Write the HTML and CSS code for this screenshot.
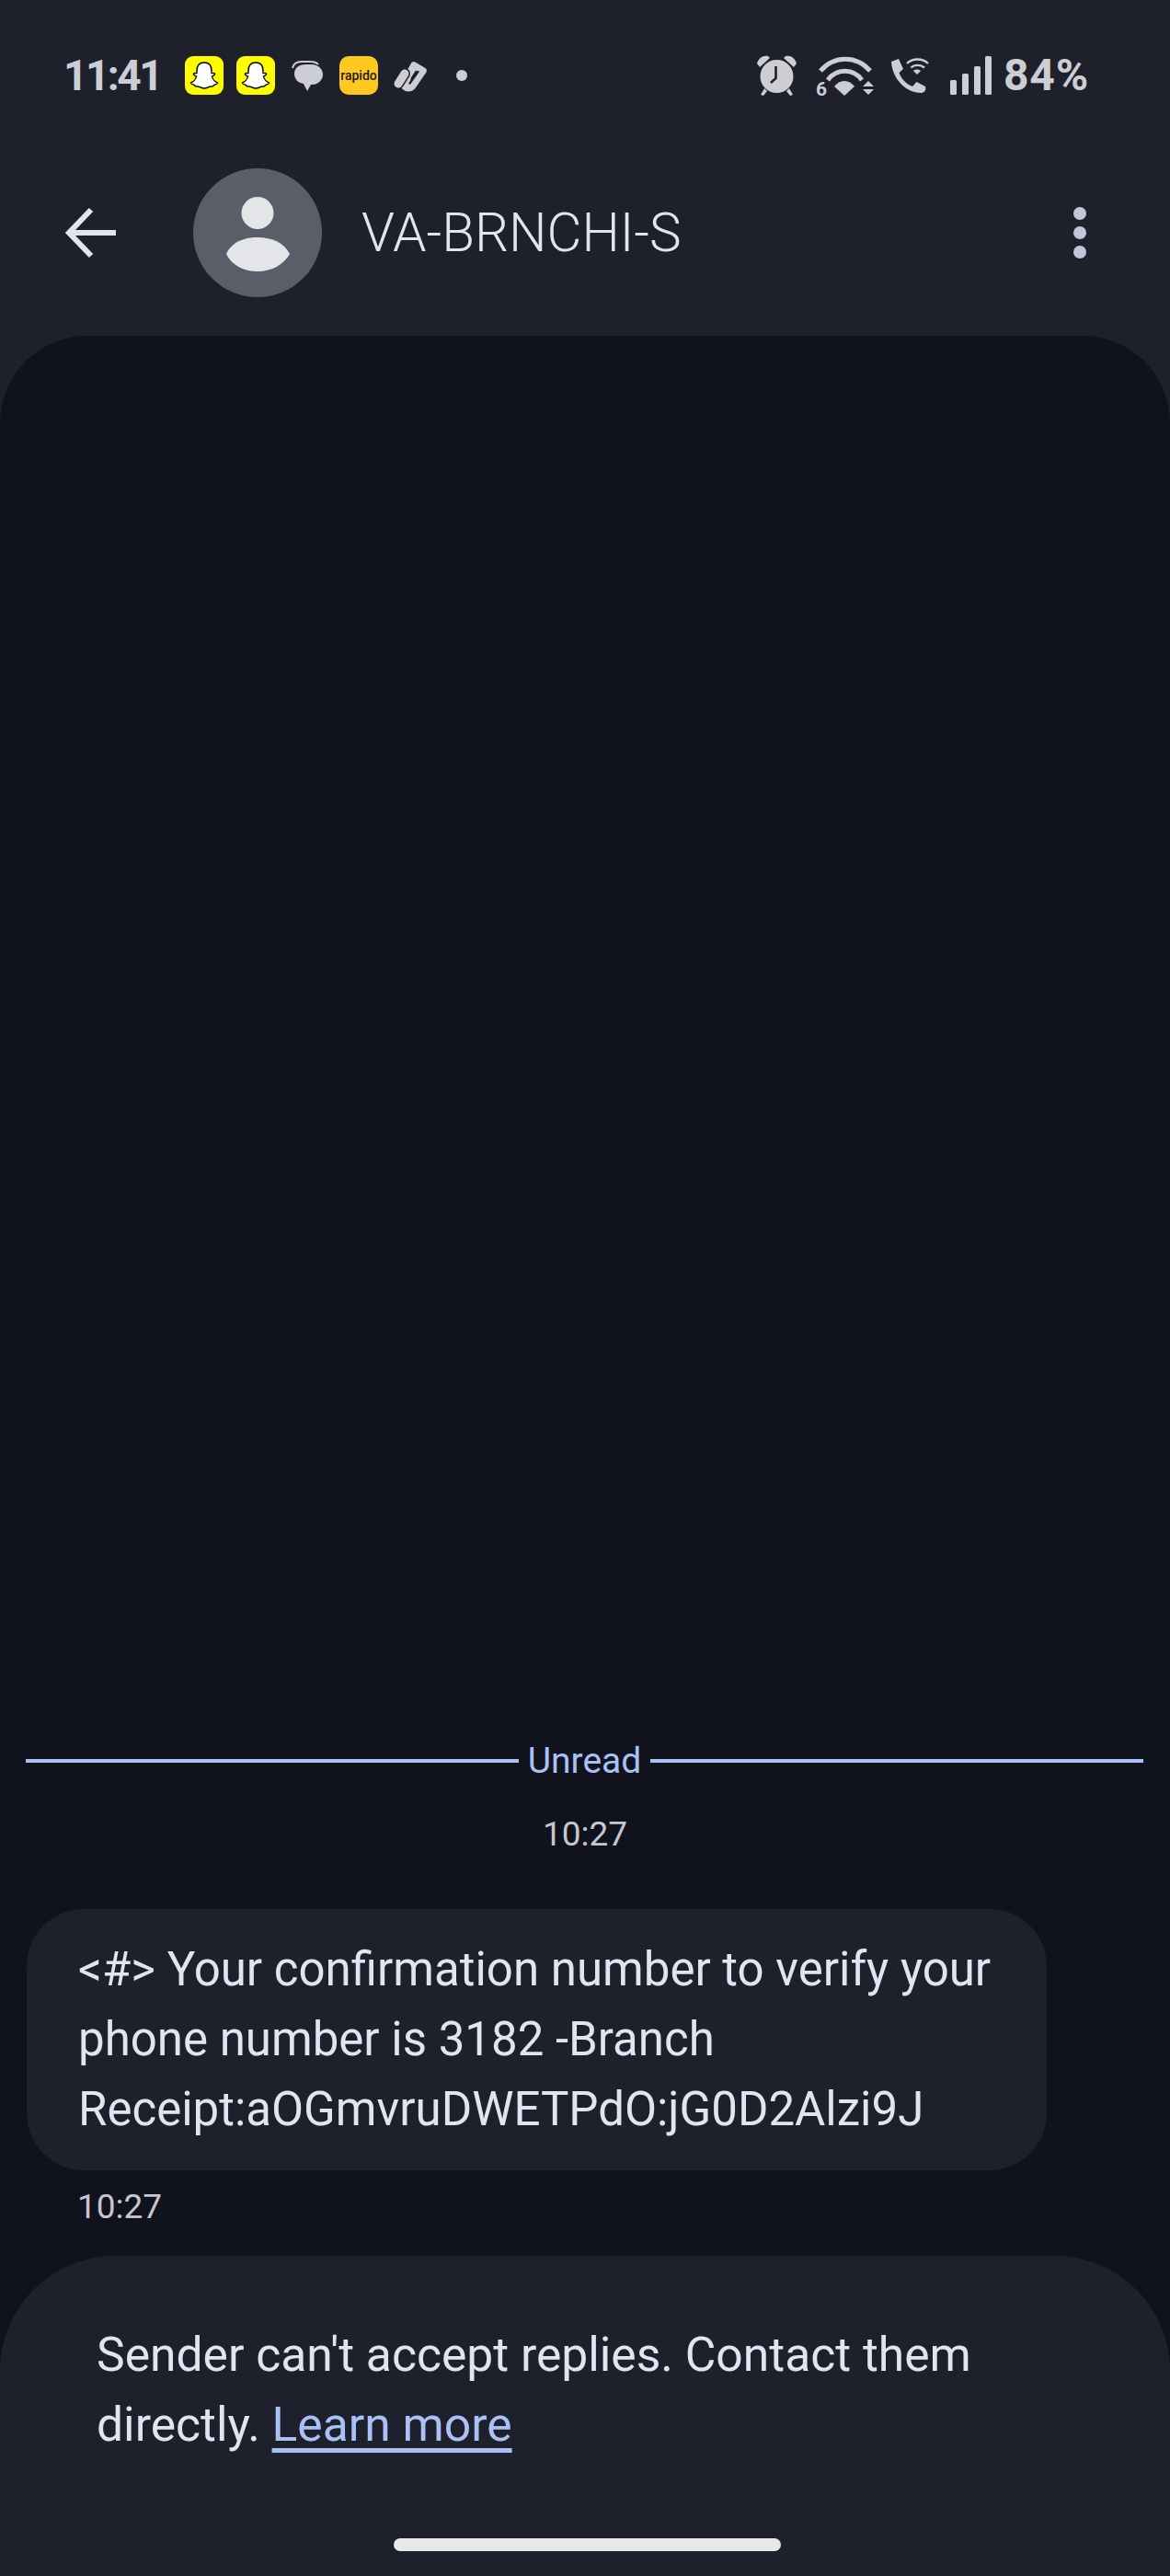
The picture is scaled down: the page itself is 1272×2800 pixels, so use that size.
FILE: index.html
```html
<!DOCTYPE html>
<html lang="en">
<head>
<meta charset="utf-8">
<title>VA-BRNCHI-S</title>
<link rel="stylesheet" href="styles.css">
</head>
<body>
<div class="app">
  <div class="status-bar">
    <span class="clock">11:41</span>
    <svg class="ico snap" viewBox="0 0 42 42"><rect width="42" height="42" rx="9" fill="#fffc00"/><path d="M21 7C15.5 7 13 11 13 16L13 18.5C12 19 10.5 18 9.5 19C9 20.5 11.5 21.5 12.5 22C12 25 9 28 6.5 29C6.5 30.5 9.5 31 10.5 31.5C11 33 11.5 33.5 14 33C16 33 18 35 21 35C24 35 26 33 28 33C30.5 33.5 31 33 31.5 31.5C32.5 31 35.5 30.5 35.5 29C33 28 30 25 29.5 22C30.5 21.5 33 20.5 32.5 19C31.5 18 30 19 29 18.5L29 16C29 11 26.5 7 21 7Z" fill="#fff" stroke="#000" stroke-width="1.4"/></svg>
    <svg class="ico snap snap2" viewBox="0 0 42 42"><rect width="42" height="42" rx="9" fill="#fffc00"/><path d="M21 7C15.5 7 13 11 13 16L13 18.5C12 19 10.5 18 9.5 19C9 20.5 11.5 21.5 12.5 22C12 25 9 28 6.5 29C6.5 30.5 9.5 31 10.5 31.5C11 33 11.5 33.5 14 33C16 33 18 35 21 35C24 35 26 33 28 33C30.5 33.5 31 33 31.5 31.5C32.5 31 35.5 30.5 35.5 29C33 28 30 25 29.5 22C30.5 21.5 33 20.5 32.5 19C31.5 18 30 19 29 18.5L29 16C29 11 26.5 7 21 7Z" fill="#fff" stroke="#000" stroke-width="1.4"/></svg>
    <svg class="ico bubble" viewBox="0 0 34 33"><path d="M1 8C2 3 6 1 11 1H20C24 1 27 2 29 4" fill="none" stroke="#cdced3" stroke-width="2"/><path d="M3 14C3 8 8 4 15 4H22C29 4 34 9 34 15C34 21 29 26 22 26H21L17 33L13 25C7 24 3 20 3 14Z" fill="#cdced3"/></svg>
    <span class="rapido">rapido</span>
    <svg class="ico clip" viewBox="0 0 38 33"><g fill="none" stroke-linecap="round" stroke-linejoin="round"><path d="M23 5L33 11L22 27C19 31 15 30 13 28" stroke="#cdced3" stroke-width="7.5"/><path d="M23 6L16 17L15 25" stroke="#cdced3" stroke-width="8"/><path d="M18.5 24.5L27.5 12" stroke="#1e212b" stroke-width="2.2"/><path d="M6 25L13 14" stroke="#1e212b" stroke-width="12"/><path d="M6 25L13 14" stroke="#cdced3" stroke-width="9"/></g></svg>
    <span class="status-dot"></span>
    <div class="status-right">
      <svg class="ico alarm" viewBox="0 0 43 44"><g fill="#cdced3"><circle cx="21.5" cy="23" r="18"/><path d="M0 9C2 3 6 0 12 1L14 3L3 13Z"/><path d="M43 9C41 3 37 0 31 1L29 3L40 13Z"/><path d="M8 36L11 39L7 44L4 43Z"/><path d="M35 36L32 39L36 44L39 43Z"/></g><path d="M20.5 12V25L15 30" fill="none" stroke="#1e212b" stroke-width="2.6"/></svg>
      <svg class="ico wifi" viewBox="0 0 63 43"><g fill="none" stroke="#cdced3" stroke-width="5"><path d="M5 16C20 -1 44 -1 59 16"/><path d="M13 26C22 13 41 13 50 26"/></g><path d="M20 33C26 25 36 25 42 33L31 43Z" fill="#cdced3"/><text class="wifi-six" x="0" y="43">6</text><path d="M51 33L57 27L63 33Z" fill="#cdced3"/><path d="M51 36H63L57 42Z" fill="#cdced3"/></svg>
      <svg class="ico phone" viewBox="0 0 41 39"><path d="M1 4L9 1L14 12L9.5 16C12 23 17 28 24 31L28.5 26L38 31C39 34 38 37 34 38C16 38 2 22 1 4Z" fill="#cdced3"/><g fill="none" stroke="#cdced3" stroke-width="2.4"><path d="M18 6C24 0 35 0 41 6"/><path d="M22.5 10.5C26 7 33 7 37 10.5"/></g><path d="M25 14C27 12 31 12 33 14L29 18Z" fill="#cdced3"/></svg>
      <svg class="ico signal" viewBox="0 0 45 42"><g fill="#cdced3"><rect x="0" y="26" width="7" height="16" rx="1.5"/><rect x="13" y="19" width="7" height="23" rx="1.5"/><rect x="26" y="11" width="7" height="31" rx="1.5"/><rect x="38" y="0" width="7" height="42" rx="1.5"/></g></svg>
      <span class="battery">84%</span>
    </div>
  </div>

  <div class="header">
    <svg class="ico back" viewBox="0 0 55 56"><path d="M55 28H6M28 3L4 28L28 53" fill="none" stroke="#e2e4f2" stroke-width="6"/></svg>
    <svg class="ico avatar" viewBox="0 0 140 140"><circle cx="70" cy="70" r="70" fill="#5a5e69"/><circle cx="70" cy="48.5" r="17.5" fill="#e4e5e8"/><path d="M36 93C41 81 54 75 70 75C86 75 99 81 105 93C99 104 86 112 70 112C54 112 41 104 36 93Z" fill="#e4e5e8"/></svg>
    <span class="name">VA-BRNCHI-S</span>
    <div class="menu"><span></span><span></span><span></span></div>
  </div>

  <main class="thread">
    <div class="unread"><span class="rule"></span><span class="unread-label">Unread</span><span class="rule"></span></div>
    <div class="stamp-center">10:27</div>
    <div class="bubble-msg">&lt;#&gt; Your confirmation number to verify your phone number is 3182 -Branch Receipt:aOGmvruDWETPdO:jG0D2Alzi9J</div>
    <div class="stamp-left">10:27</div>
    <footer class="notice">
      <p class="notice-text">Sender can't accept replies. Contact them directly. <a class="learn" href="#">Learn more</a></p>
      <div class="nav-pill"></div>
    </footer>
  </main>
</div>
</body>
</html>
```
FILE: styles.css
```css
* { box-sizing: border-box; }
html, body { margin: 0; padding: 0; }
body { background: #1e212b; font-family: Roboto, "Open Sans", sans-serif; color: #e2e4f2; }
.app { width: 1272px; height: 2800px; display: flex; flex-direction: column; background: #1e212b; overflow: hidden; }
.ico { display: block; flex: none; overflow: visible; }

.status-bar { display: flex; align-items: center; height: 44px; margin-top: 60px; padding: 0 88px 0 69px; color: #cdced3; }
.clock { font-size: 46px; font-weight: 700; letter-spacing: -2.5px; width: 102px; line-height: 44px; flex: none; }
.snap { width: 42px; height: 42px; margin-left: 30px; }
.snap2 { margin-left: 14px; }
.bubble { width: 34px; height: 33px; margin-left: 18px; }
.rapido { width: 42px; height: 42px; margin-left: 18px; border-radius: 10px; background: #ffc81f; color: #1a1a1a; font-size: 14px; font-weight: 500; line-height: 42px; text-align: center; flex: none; }
.clip { width: 38px; height: 33px; margin-left: 16px; }
.status-dot { width: 12px; height: 12px; border-radius: 50%; background: #cdced3; margin-left: 31px; flex: none; }
.status-right { display: flex; align-items: center; margin-left: auto; }
.alarm { width: 43px; height: 44px; }
.wifi { width: 63px; height: 43px; margin-left: 21px; }
.wifi-six { font-family: Roboto, sans-serif; font-size: 21px; font-weight: 700; fill: #cdced3; }
.phone { width: 41px; height: 39px; margin-left: 18px; }
.signal { width: 45px; height: 42px; margin-left: 24px; }
.battery { font-size: 48px; font-weight: 700; letter-spacing: 0.8px; width: 93px; margin-left: 13px; line-height: 44px; white-space: nowrap; flex: none; }

.header { display: flex; align-items: center; height: 140px; margin-top: 79px; padding: 0 91px 0 71px; }
.back { width: 55px; height: 56px; }
.avatar { width: 140px; height: 140px; margin-left: 84px; }
.name { font-size: 58.4px; font-weight: 300; margin-left: 43px; color: #e2e4f2; }
.menu { display: flex; flex-direction: column; gap: 7px; margin-left: auto; }
.menu span { width: 14px; height: 14px; border-radius: 50%; background: #c3c6da; }

.thread { flex: 1; margin-top: 42px; background: #10131c; border-radius: 95px 95px 0 0; display: flex; flex-direction: column; justify-content: flex-end; min-height: 0; }
.unread { display: flex; align-items: center; gap: 10px; padding: 0 29px 0 28px; color: #a9c1f7; font-size: 39px; line-height: 48px; }
.rule { flex: 1; height: 4px; background: #a9c1f7; }
.unread-label { flex: none; }
.stamp-center { text-align: center; font-size: 37px; line-height: 48px; color: #c5c6d0; margin-top: 32px; }
.bubble-msg { margin: 57px 0 0 29px; width: 1109px; height: 284px; padding: 28px 56px 0; background: #1e212b; border-radius: 62px; font-size: 51px; line-height: 76px; color: #e2e4f2; }
.stamp-left { margin: 16px 0 0 84px; font-size: 37px; line-height: 48px; color: #c5c6d0; }
.notice { height: 348px; margin-top: 29px; background: #1e212b; border-radius: 125px 125px 0 0; padding: 70px 105px 0; position: relative; }
.notice-text { margin: 0; font-size: 51.6px; line-height: 76px; color: #e2e4f2; width: 1000px; }
.learn { color: #a9c1f7; text-decoration: underline; text-decoration-thickness: 5px; text-underline-offset: 8px; }
.nav-pill { position: absolute; left: 428px; top: 307px; width: 421px; height: 14px; border-radius: 7px; background: #e8e8e8; }
```
